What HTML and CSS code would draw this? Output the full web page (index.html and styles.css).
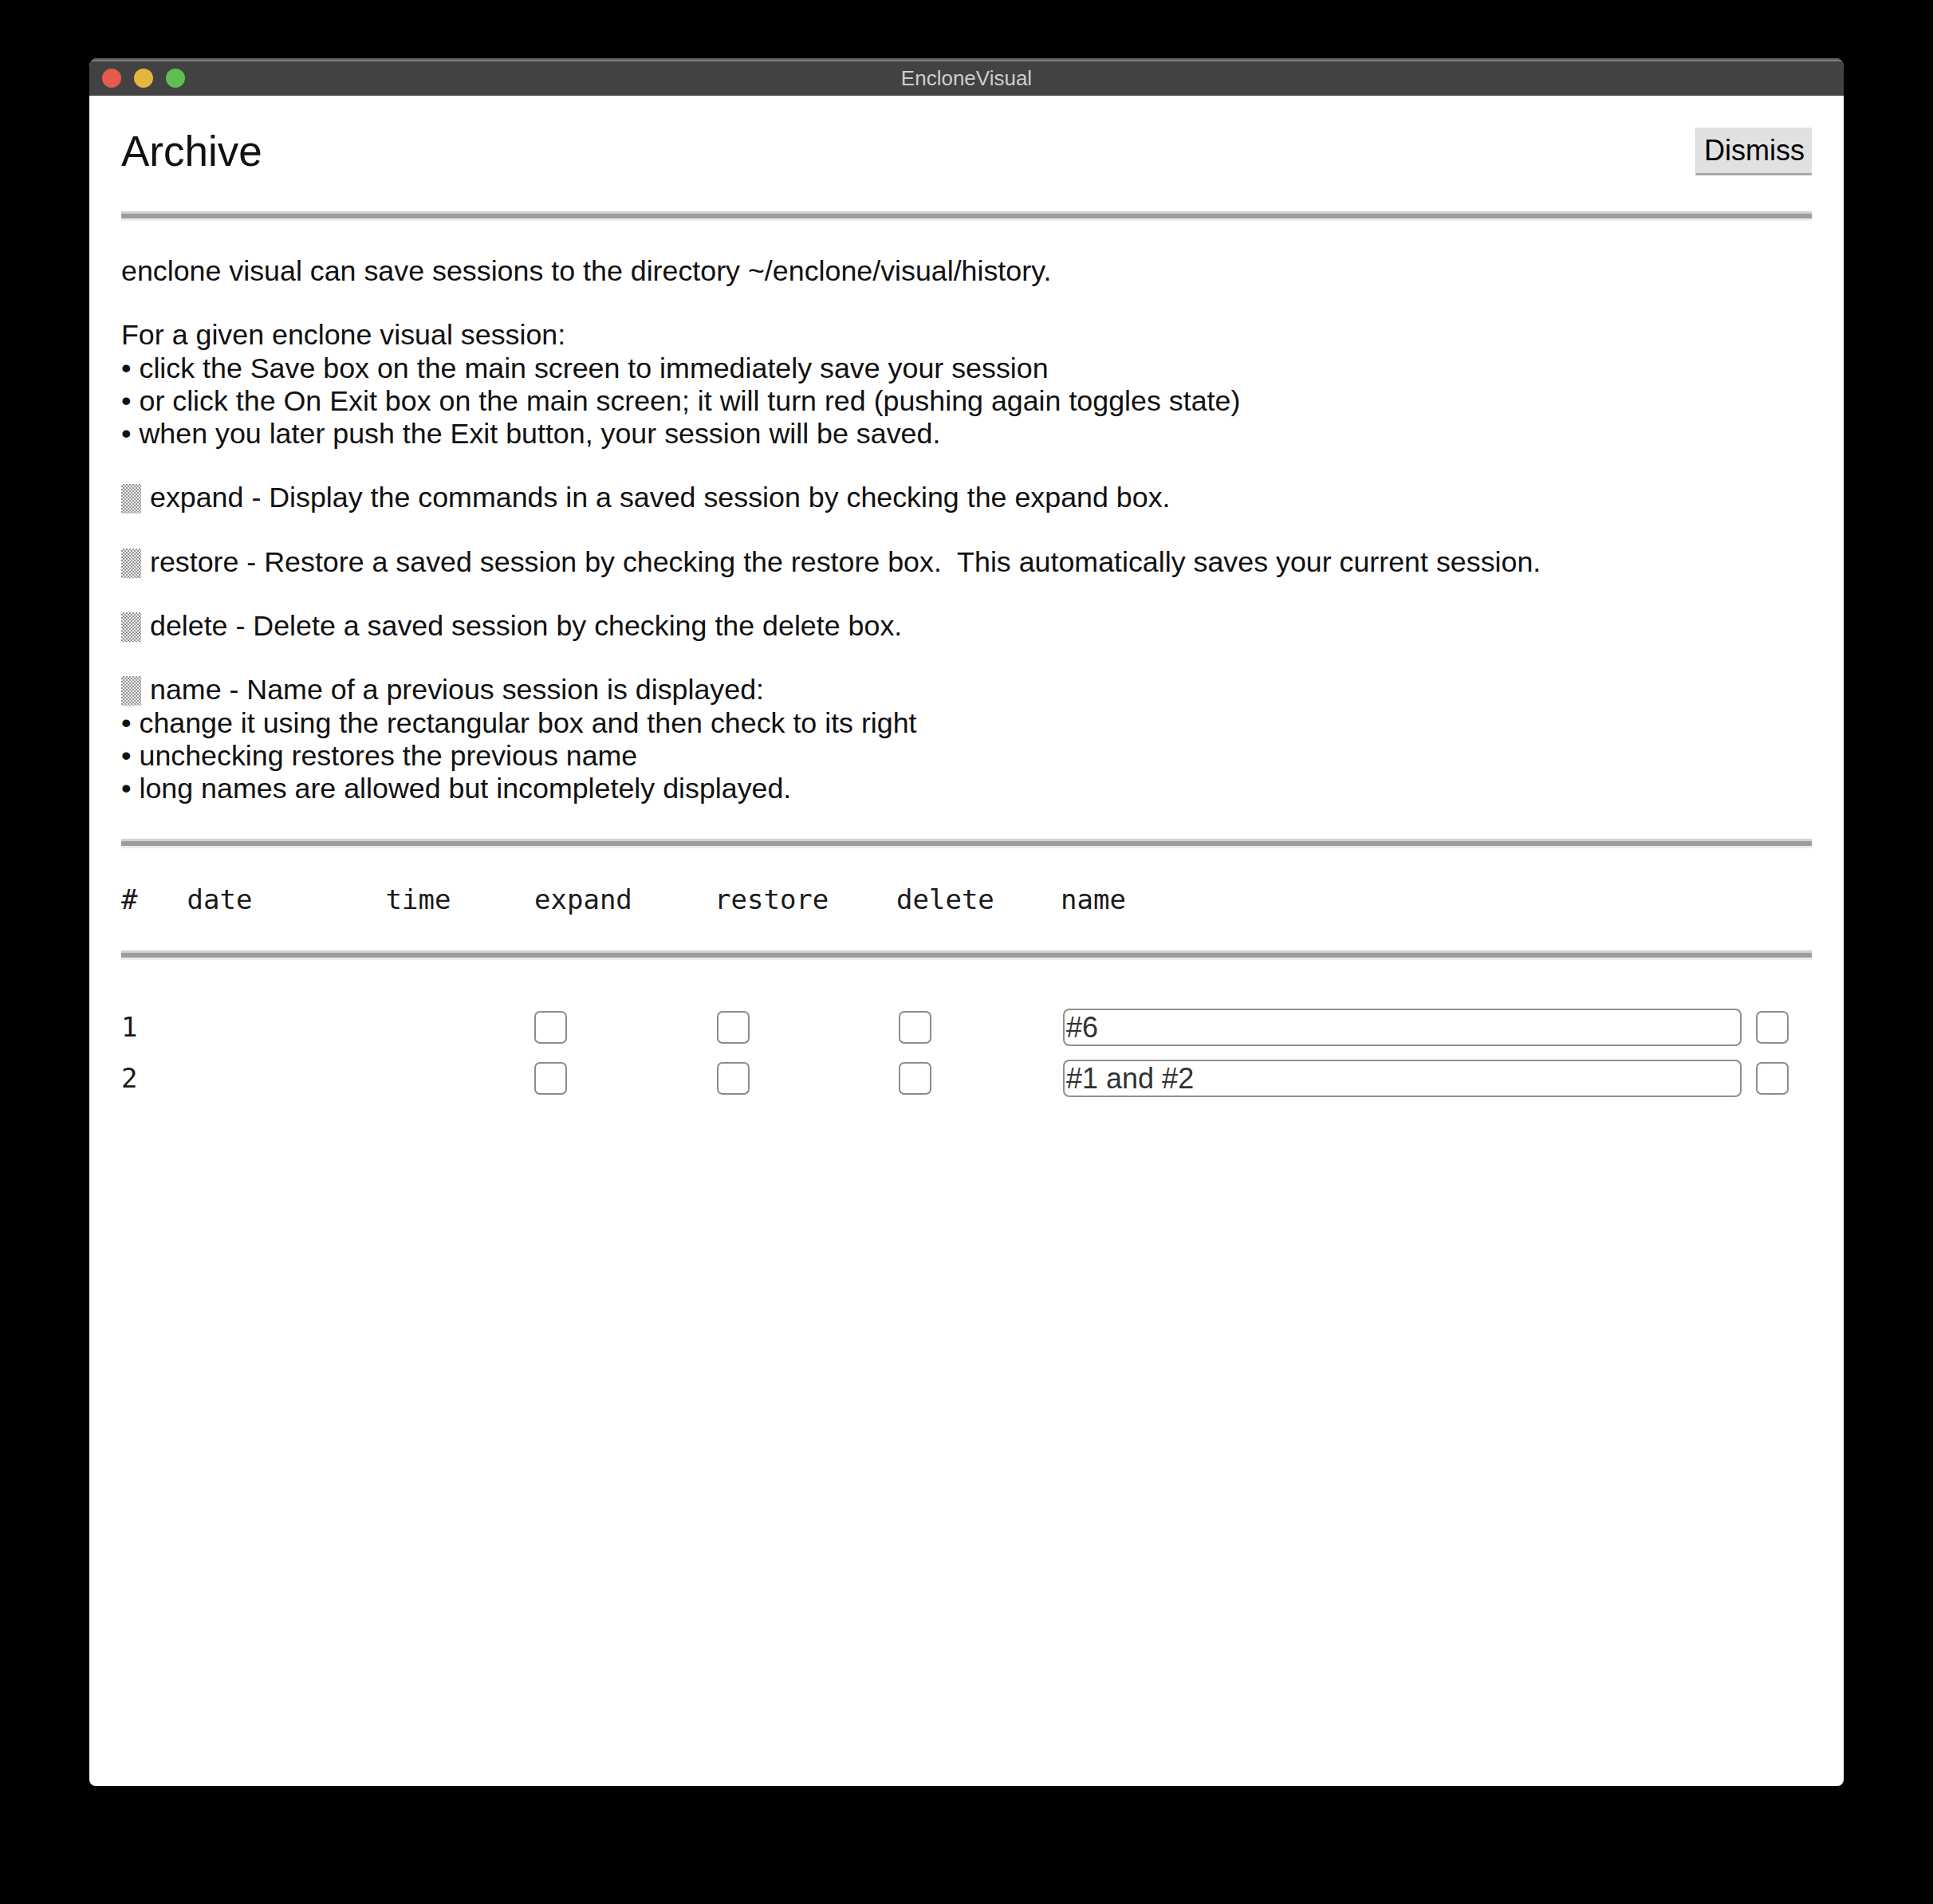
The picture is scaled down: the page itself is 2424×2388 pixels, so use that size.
FILE: index.html
```html
<!DOCTYPE html>
<html>
<head>
<meta charset="utf-8">
<title>EncloneVisual</title>
<link rel="stylesheet" href="styles.css">
</head>
<body>
<div class="window">
  <div class="titlebar">
    <div class="lights">
      <span class="light red"></span>
      <span class="light yellow"></span>
      <span class="light green"></span>
    </div>
    <div class="title">EncloneVisual</div>
    <div></div>
  </div>
  <div class="content">
    <div class="head">
      <h1>Archive</h1>
      <button class="dismiss">Dismiss</button>
    </div>
    <div class="rule rule-top"></div>
    <div class="help">
      <p>enclone visual can save sessions to the directory ~/enclone/visual/history.</p>
      <p>For a given enclone visual session:<br>• click the Save box on the main screen to immediately save your session<br>• or click the On Exit box on the main screen; it will turn red (pushing again toggles state)<br>• when you later push the Exit button, your session will be saved.</p>
      <p><span class="swatch"></span>expand - Display the commands in a saved session by checking the expand box.</p>
      <p><span class="swatch"></span>restore - Restore a saved session by checking the restore box.&nbsp; This automatically saves your current session.</p>
      <p><span class="swatch"></span>delete - Delete a saved session by checking the delete box.</p>
      <p><span class="swatch"></span>name - Name of a previous session is displayed:<br>• change it using the rectangular box and then check to its right<br>• unchecking restores the previous name<br>• long names are allowed but incompletely displayed.</p>
    </div>
    <div class="rule rule-mid"></div>
    <div class="colhead">
      <span>#</span><span>date</span><span>time</span><span>expand</span><span>restore</span><span>delete</span><span>name</span>
    </div>
    <div class="rule rule-low"></div>
    <div class="rows">
      <div class="row">
        <span class="num">1</span><span></span><span></span>
        <span><span class="box"></span></span>
        <span><span class="box"></span></span>
        <span><span class="box"></span></span>
        <span class="namecell"><span class="namefield">#6</span><span class="box"></span></span>
      </div>
      <div class="row">
        <span class="num">2</span><span></span><span></span>
        <span><span class="box"></span></span>
        <span><span class="box"></span></span>
        <span><span class="box"></span></span>
        <span class="namecell"><span class="namefield">#1 and #2</span><span class="box"></span></span>
      </div>
    </div>
  </div>
</div>
</body>
</html>
```

FILE: styles.css
```css
html, body {
  margin: 0;
  padding: 0;
}

body {
  background: #000;
  width: 2424px;
  height: 2388px;
  overflow: hidden;
  font-family: "Liberation Sans", Arial, sans-serif;
}

.window {
  margin: 73px 0 0 112px;
  width: 2200px;
  height: 2167px;
  background: #fff;
  border-radius: 10px 10px 8px 8px;
  overflow: hidden;
  display: flex;
  flex-direction: column;
}

.titlebar {
  height: 47px;
  box-sizing: border-box;
  background: #424242;
  border-top: 2px solid #5c5c5c;
  box-shadow: inset 0 2px 0 #7a7a7a;
  display: grid;
  grid-template-columns: 1fr auto 1fr;
  align-items: center;
}

.lights {
  display: flex;
  gap: 16px;
  padding-left: 16px;
}

.light {
  width: 24px;
  height: 24px;
  border-radius: 50%;
}

.red { background: #e5594f; }
.yellow { background: #e6b53f; }
.green { background: #5fbf50; }

.title {
  color: #cdcdcd;
  font-size: 26px;
  line-height: 30px;
}

.content {
  padding: 40px 40px 0;
}

.head {
  display: flex;
  justify-content: space-between;
  align-items: flex-start;
}

h1 {
  margin: 0;
  font-weight: normal;
  font-size: 53px;
  line-height: 60px;
  color: #111;
}

.dismiss {
  height: 60px;
  box-sizing: border-box;
  margin: 0;
  padding: 0 9px 0 10px;
  border: 0;
  border-left: 1px solid #d3d3d3;
  border-bottom: 3px solid #a8a8a8;
  background: #e1e1e1;
  color: #000;
  font-family: "Liberation Sans", Arial, sans-serif;
  font-size: 36px;
  line-height: 40px;
}

.rule {
  height: 6px;
  background: #9d9d9d;
  border-top: 3px solid #d2d2d2;
  border-bottom: 3px solid #ececec;
}

.rule-top { margin-top: 45px; }
.rule-mid { margin-top: 41px; }
.rule-low { margin-top: 43.5px; }

.help {
  margin-top: 43px;
  font-size: 35.8px;
  line-height: 41.3px;
  color: #111;
}

.help p {
  margin: 0 0 39px;
}

.help p:last-child {
  margin-bottom: 0;
}

.swatch {
  display: inline-block;
  width: 25px;
  height: 37px;
  margin-right: 11px;
  vertical-align: -8px;
  background: repeating-conic-gradient(#939393 0 25%, #f4f4f4 0 50%) 0 0 / 4px 4px;
}

.colhead {
  display: grid;
  grid-template-columns: 82.5px 249px 186.5px 226px 228px 206px 1fr;
  align-items: center;
  margin-top: 44.5px;
  font-family: "DejaVu Sans Mono", "Liberation Mono", monospace;
  font-size: 34px;
  line-height: 40px;
  color: #1a1a1a;
}

.rows {
  margin-top: 61px;
  display: flex;
  flex-direction: column;
  gap: 17px;
}

.row {
  display: grid;
  grid-template-columns: 84px 249px 185px 229px 228px 206px 1fr;
  align-items: center;
  height: 47px;
}

.num {
  font-family: "DejaVu Sans Mono", "Liberation Mono", monospace;
  font-size: 34px;
  line-height: 40px;
  color: #1a1a1a;
}

.box {
  display: block;
  width: 41px;
  height: 41px;
  box-sizing: border-box;
  border: 2px solid #8c8c8c;
  border-radius: 7px;
  background: #fff;
}

.namecell {
  display: flex;
  align-items: center;
  gap: 18px;
}

.namefield {
  display: block;
  width: 851px;
  height: 47px;
  box-sizing: border-box;
  border: 2px solid #8f8f8f;
  border-radius: 8px;
  padding: 0 2px;
  font-size: 36px;
  line-height: 43px;
  color: #333;
}
```
